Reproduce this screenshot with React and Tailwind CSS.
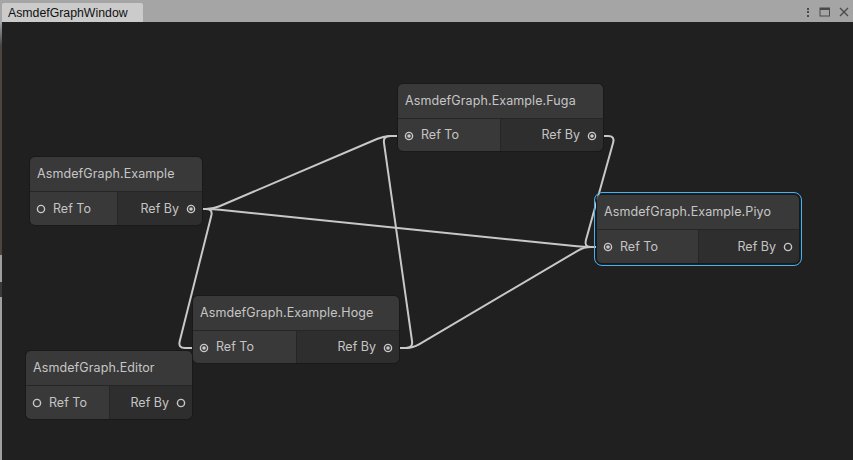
import React from 'react'

// node boxes in page coordinates (canvas starts at x=2, y=22)
const nodes = [
    { id: 'example', title: 'AsmdefGraph.Example', x: 29, y: 156, w: 174, h: 70, left: 87, toOn: false, byOn: true },
    { id: 'fuga', title: 'AsmdefGraph.Example.Fuga', x: 397, y: 83, w: 207, h: 69, left: 102, toOn: true, byOn: true },
    { id: 'piyo', title: 'AsmdefGraph.Example.Piyo', x: 596, y: 194, w: 204, h: 70, left: 101, toOn: true, byOn: false, selected: true },
    { id: 'hoge', title: 'AsmdefGraph.Example.Hoge', x: 192, y: 295, w: 208, h: 69, left: 103, toOn: true, byOn: true },
    { id: 'editor', title: 'AsmdefGraph.Editor', x: 25, y: 350, w: 168, h: 70, left: 83, toOn: false, byOn: false },
]

const edges = [
    [[190, 209], [213, 209], [384, 136], [409, 136]],
    [[190, 209], [213, 209], [584, 247], [609, 247]],
    [[190, 209], [213, 209], [178, 348], [204, 348]],
    [[591, 136], [615, 136], [584, 247], [609, 247]],
    [[387, 348], [413, 348], [383, 136], [409, 136]],
    [[387, 348], [413, 348], [584, 247], [609, 247]],
]

function roundedPath(pts, r) {
    let d = `M${pts[0][0]},${pts[0][1]}`
    for (let i = 1; i < pts.length - 1; i++) {
        const [px, py] = pts[i - 1]
        const [cx, cy] = pts[i]
        const [nx, ny] = pts[i + 1]
        const l1 = Math.hypot(cx - px, cy - py)
        const l2 = Math.hypot(nx - cx, ny - cy)
        const rr = Math.min(r, l1 / 2, l2 / 2)
        const ax = cx - ((cx - px) / l1) * rr
        const ay = cy - ((cy - py) / l1) * rr
        const bx = cx + ((nx - cx) / l2) * rr
        const by = cy + ((ny - cy) / l2) * rr
        d += ` L${ax},${ay} Q${cx},${cy} ${bx},${by}`
    }
    const last = pts[pts.length - 1]
    d += ` L${last[0]},${last[1]}`
    return d
}

function Port({ on }) {
    return (
        <svg width="10" height="10" viewBox="0 0 10 10" className="shrink-0">
            <circle cx="5" cy="5" r="3.6" fill="none" stroke="#c8c8c8" strokeWidth="1.4" />
            {on && <circle cx="5" cy="5" r="1.8" fill="#c8c8c8" />}
        </svg>
    )
}

function Node({ node }) {
    return (
        <div
            className={
                'absolute flex flex-col rounded-[6px] border border-[#191919] ' +
                (node.selected ? 'outline-[1.5px] outline-solid outline-[#42b4f5] outline-offset-[1px]' : '')
            }
            style={{ left: node.x - 2, top: node.y - 22, width: node.w, height: node.h }}
        >
            <div className="h-[35px] shrink-0 flex items-center pl-[7px] pt-[1px] bg-[#393939] rounded-t-[5px] border-b border-[#262626] text-[12.5px] tracking-[0.1px] text-[#c6c6c6]">
                {node.title}
            </div>
            <div className="flex flex-1 text-[12.5px] text-[#c4c4c4] rounded-b-[5px] overflow-hidden">
                <div className="flex items-center gap-[7px] pl-[6px] pt-[1px] bg-[#393939]" style={{ width: node.left }}>
                    <Port on={node.toOn} />
                    <span>Ref To</span>
                </div>
                <div className="flex flex-1 items-center justify-end gap-[7px] pr-[6px] pt-[1px] bg-[#2e2e2e] border-l border-[#262626]">
                    <span>Ref By</span>
                    <Port on={node.byOn} />
                </div>
            </div>
        </div>
    )
}

export default function App() {
    return (
        <div className="w-[853px] h-[460px] flex flex-col bg-[#a5a5a5] overflow-hidden" style={{ fontFamily: 'Inter, "Noto Sans", sans-serif' }}>
            {/* tab bar */}
            <div className="h-[22px] shrink-0 flex items-end justify-between">
                <div className="ml-[2px] w-[141px] h-[19px] bg-[#cbcbcb] rounded-t-[2px] flex items-center pl-[6px] pt-[2px] text-[12.3px] text-[#111]" style={{ fontFamily: '"Liberation Sans", Arial, sans-serif' }}>
                    AsmdefGraphWindow
                </div>
                <div className="self-stretch flex items-center gap-[8px] pr-[4px] pt-[2px]">
                    <div className="flex flex-col gap-[1.5px]">
                        <div className="w-[2px] h-[2px] bg-[#4a4a4a]" />
                        <div className="w-[2px] h-[2px] bg-[#4a4a4a]" />
                        <div className="w-[2px] h-[2px] bg-[#4a4a4a]" />
                    </div>
                    <svg width="12" height="10" viewBox="0 0 12 10" className="ml-[2px]">
                        <rect x="1" y="1" width="9.5" height="8" fill="none" stroke="#4a4a4a" strokeWidth="1" />
                        <rect x="1" y="1" width="9.5" height="2" fill="#4a4a4a" />
                    </svg>
                    <svg width="10" height="10" viewBox="0 0 10 10">
                        <path d="M1 1 L9 9 M9 1 L1 9" stroke="#4a4a4a" strokeWidth="1.3" />
                    </svg>
                </div>
            </div>

            <div className="flex flex-1">
                {/* sliver of the window behind */}
                <div className="w-[2px] flex flex-col">
                    <div className="h-[24px] bg-gradient-to-b from-[#9aa7ad] to-[#4a4540]" />
                    <div className="h-[209px] bg-[#4a4540]" />
                    <div className="h-[27px] bg-[#9e9e9e]" />
                    <div className="h-[15px] bg-[#3a3a3a]" />
                    <div className="flex-1 bg-[#a0a0a0]" />
                </div>

                {/* graph canvas */}
                <div className="relative flex-1 bg-[#202020]">
                    <svg className="absolute inset-0" width="851" height="438" viewBox="2 22 851 438">
                        {edges.map((pts, i) => (
                            <path key={i} d={roundedPath(pts, 7)} fill="none" stroke="#c8c8c8" strokeWidth="2" />
                        ))}
                        {edges.map((pts, i) => {
                            const a = pts[0]
                            const b = pts[pts.length - 1]
                            return (
                                <g key={'e' + i}>
                                    <line x1={a[0] + 4} y1={a[1]} x2={a[0] + 11} y2={a[1]} stroke="#8a8a8a" strokeWidth="2" />
                                    <line x1={b[0] - 11} y1={b[1]} x2={b[0] - 4} y2={b[1]} stroke="#8a8a8a" strokeWidth="2" />
                                </g>
                            )
                        })}
                    </svg>
                    {nodes.map((n) => (
                        <Node key={n.id} node={n} />
                    ))}
                </div>
            </div>
        </div>
    )
}
